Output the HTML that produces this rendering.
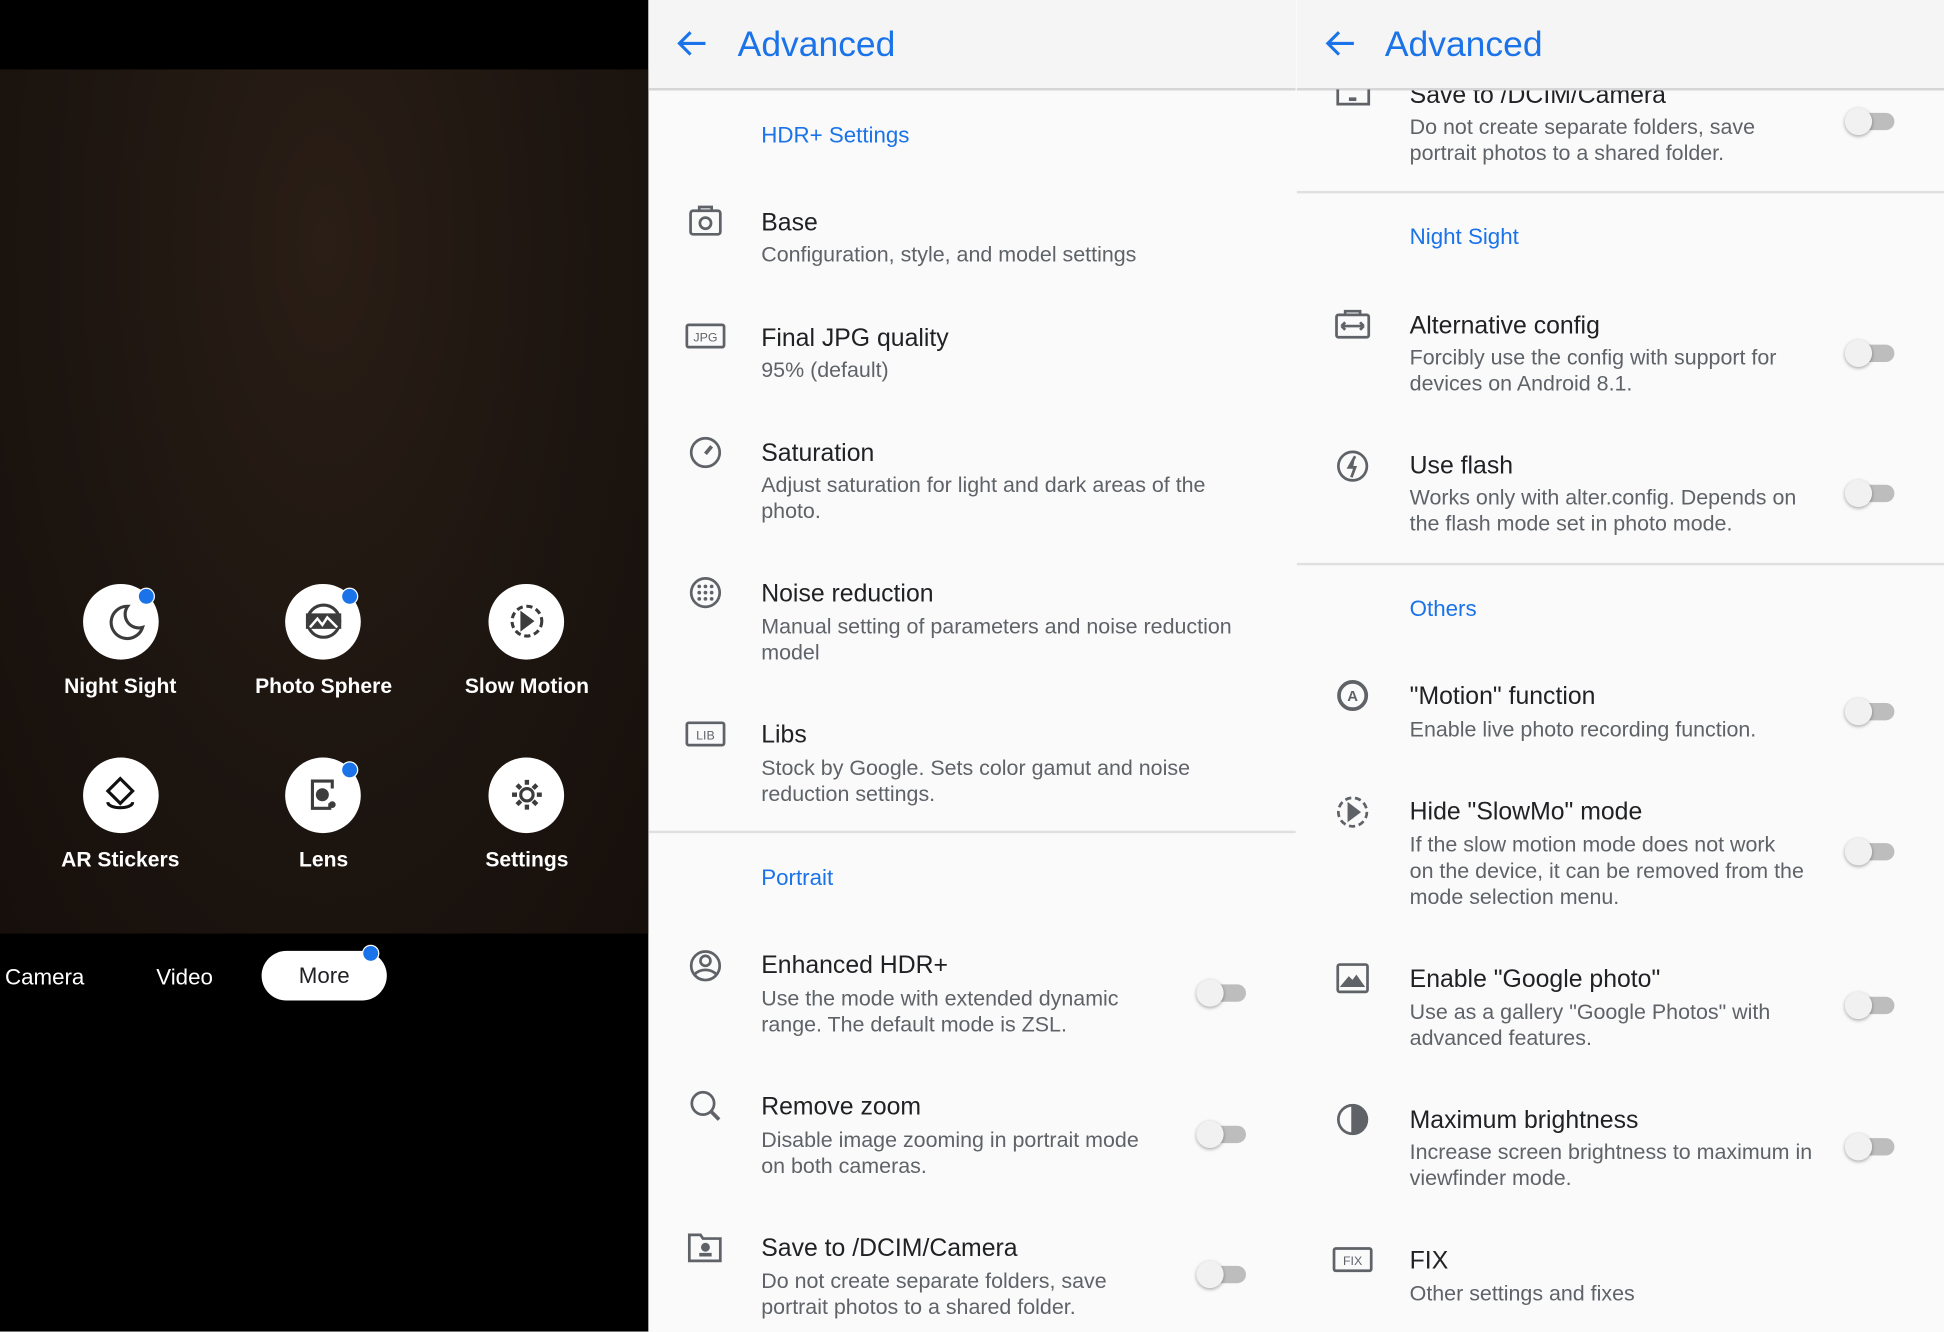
<!DOCTYPE html>
<html><head><meta charset="utf-8"><style>
html,body{margin:0;padding:0;width:1944px;height:1332px;overflow:hidden;background:#fafafa}
#w{position:absolute;left:0;top:0;width:1568px;height:1074px;transform:scale(1.23980);transform-origin:0 0;font-family:"Liberation Sans",sans-serif}
.a{position:absolute;white-space:nowrap}
.t{font-size:20px;color:#202124;line-height:24px;margin-top:1px}
.s{font-size:17.3px;color:#5f6368;line-height:21px;margin-top:1px}
.h{font-size:18px;color:#1a73e8;line-height:22px;margin-top:1px}
.lab{font-size:17px;color:#fff;line-height:20px;text-align:center;width:160px;font-weight:bold;margin-top:1px}
.c{position:absolute;width:61px;height:61px;border-radius:50%;background:#fff}
.dot{position:absolute;width:12px;height:12px;border-radius:50%;background:#1a73e8;border:1.5px solid #fff}
.tg{position:absolute;width:40px;height:24px}
.tg:before{content:"";position:absolute;left:6px;top:5px;width:34px;height:14px;border-radius:7px;background:#bdbdbd}
.tg:after{content:"";position:absolute;left:0;top:1px;width:22px;height:22px;border-radius:50%;background:#f1f1f1;box-shadow:0 1px 3px rgba(0,0,0,.35)}
.hdr{position:absolute;top:0;height:71px;background:#f5f5f5;border-bottom:2px solid #d6d6d6}
.ttl{font-size:28.6px;color:#1a73e8;line-height:34px;margin-top:1px}
.dv{position:absolute;height:2px;background:#e0e0e0}
</style></head><body><div id="w">
<!-- LEFT -->
<div class="a" style="left:0;top:0;width:523px;height:1074px;background:#000"></div>
<div class="a" style="left:0;top:56px;width:523px;height:697px;background:radial-gradient(ellipse at 50% 20%,#2a1e16 0%,#1d1510 55%,#160f0b 100%)"></div>
<div class="c" style="left:67px;top:471px"></div><div class="c" style="left:230px;top:471px"></div><div class="c" style="left:394px;top:471px"></div>
<div class="c" style="left:67px;top:611px"></div><div class="c" style="left:230px;top:611px"></div><div class="c" style="left:394px;top:611px"></div>
<div class="dot" style="left:111px;top:474px"></div><div class="dot" style="left:275px;top:474px"></div><div class="dot" style="left:275px;top:614px"></div>
<svg class="a" style="left:0;top:0" width="523" height="760" fill="none" stroke="#3c3c3c" stroke-width="2.5">
<path d="M103 489a13 13 0 1 0 12 17a11 11 0 0 1 -12 -17z"/>
<circle cx="261" cy="501" r="13"/><path d="M248 496h26v10h-26z" fill="#3c3c3c"/><path d="M250 506l6-7l4 5l4-6l8 8" stroke="#fff" stroke-width="2"/>
<circle cx="425" cy="501" r="12" stroke-dasharray="5 3"/><path d="M421 495l8 6l-8 6z" fill="#3c3c3c"/>
<path d="M97 628l10 10l-10 10l-10 -10z" stroke="#111"/><path d="M87 647c0 6 20 6 20 0" stroke="#111"/>
<path d="M258 630h-6v22h14v-4M258 630h10v6" /><circle cx="260" cy="641" r="4" fill="#3c3c3c"/><circle cx="268" cy="649" r="1.5" fill="#3c3c3c"/>
<circle cx="425" cy="641" r="5"/><path d="M425 629v4M425 649v4M413 641h4M433 641h4M417 633l3 3M430 646l3 3M417 649l3-3M430 636l3-3" stroke-width="3.5"/>
</svg>
<div class="a lab" style="left:17px;top:543px">Night Sight</div>
<div class="a lab" style="left:181px;top:543px">Photo Sphere</div>
<div class="a lab" style="left:345px;top:543px">Slow Motion</div>
<div class="a lab" style="left:17px;top:683px">AR Stickers</div>
<div class="a lab" style="left:181px;top:683px">Lens</div>
<div class="a lab" style="left:345px;top:683px">Settings</div>
<div class="a" style="left:4px;top:777px;font-size:18px;color:#fff;line-height:22px">Camera</div>
<div class="a" style="left:126px;top:777px;font-size:18px;color:#fff;line-height:22px">Video</div>
<div class="a" style="left:211px;top:767px;width:101px;height:40px;border-radius:20px;background:#fff;font-size:18px;color:#202124;line-height:41px;text-align:center">More</div>
<div class="dot" style="left:292px;top:762px"></div>

<!-- MIDDLE -->
<div class="a" style="left:523px;top:0;width:522px;height:1074px;background:#fafafa"></div>
<div class="hdr" style="left:523px;width:522px"></div>
<svg class="a" style="left:545px;top:22px" width="26" height="26" fill="none" stroke="#1a73e8" stroke-width="2.5"><path d="M24 13H3M12 4L3 13l9 9"/></svg>
<div class="a ttl" style="left:595px;top:18px">Advanced</div>
<div class="a h" style="left:614px;top:97px">HDR+ Settings</div>
<div class="a t" style="left:614px;top:167px">Base</div><div class="a s" style="left:614px;top:194px">Configuration, style, and model settings</div>
<div class="a t" style="left:614px;top:260px">Final JPG quality</div><div class="a s" style="left:614px;top:287px">95% (default)</div>
<div class="a t" style="left:614px;top:353px">Saturation</div><div class="a s" style="left:614px;top:380px">Adjust saturation for light and dark areas of the<br>photo.</div>
<div class="a t" style="left:614px;top:466px">Noise reduction</div><div class="a s" style="left:614px;top:494px">Manual setting of parameters and noise reduction<br>model</div>
<div class="a t" style="left:614px;top:580px">Libs</div><div class="a s" style="left:614px;top:608px">Stock by Google. Sets color gamut and noise<br>reduction settings.</div>
<div class="dv" style="left:523px;top:670px;width:522px"></div>
<div class="a h" style="left:614px;top:696px">Portrait</div>
<div class="a t" style="left:614px;top:766px">Enhanced HDR+</div><div class="a s" style="left:614px;top:794px">Use the mode with extended dynamic<br>range. The default mode is ZSL.</div>
<div class="a t" style="left:614px;top:880px">Remove zoom</div><div class="a s" style="left:614px;top:908px">Disable image zooming in portrait mode<br>on both cameras.</div>
<div class="a t" style="left:614px;top:994px">Save to /DCIM/Camera</div><div class="a s" style="left:614px;top:1022px">Do not create separate folders, save<br>portrait photos to a shared folder.</div>
<div class="tg" style="left:965px;top:789px"></div><div class="tg" style="left:965px;top:903px"></div><div class="tg" style="left:965px;top:1016px"></div>
<svg class="a" style="left:540px;top:150px" width="60" height="920" fill="none" stroke="#5f6368" stroke-width="2.2">
<rect x="17" y="20" width="24" height="19" rx="2"/><path d="M24 20v-3h10v3"/><circle cx="29" cy="30" r="4.5"/>
<rect x="14" y="112" width="30" height="18" rx="1.5"/><text x="29" y="125.5" font-size="10" fill="#5f6368" stroke="none" text-anchor="middle" font-family="Liberation Sans">JPG</text>
<circle cx="29" cy="215" r="11.5"/><path d="M29 216l5-6" stroke-width="3"/>
<circle cx="29" cy="328" r="11.5"/><g fill="#5f6368" stroke="none"><circle cx="24" cy="323" r="1.5"/><circle cx="29" cy="323" r="1.5"/><circle cx="34" cy="323" r="1.5"/><circle cx="24" cy="328" r="1.5"/><circle cx="29" cy="328" r="1.5"/><circle cx="34" cy="328" r="1.5"/><circle cx="24" cy="333" r="1.5"/><circle cx="29" cy="333" r="1.5"/><circle cx="34" cy="333" r="1.5"/></g>
<rect x="14" y="433" width="30" height="18" rx="1.5"/><text x="29" y="446.5" font-size="10" fill="#5f6368" stroke="none" text-anchor="middle" font-family="Liberation Sans">LIB</text>
<circle cx="29" cy="629" r="11.5"/><circle cx="29" cy="625" r="4"/><path d="M20 636c5-5 13-5 18 0"/>
<circle cx="27" cy="740" r="9"/><path d="M34 747l6 6" stroke-width="3"/>
<path d="M16 846h9l2 3h14v18h-25z"/><circle cx="29" cy="856" r="2.5" fill="#5f6368"/><path d="M24 862h10" stroke-width="3"/>
</svg>

<!-- RIGHT -->
<div class="a" style="left:1046px;top:0;width:522px;height:1074px;background:#fafafa"></div>
<div class="a t" style="left:1137px;top:64px">Save to /DCIM/Camera</div><div class="a s" style="left:1137px;top:91px">Do not create separate folders, save<br>portrait photos to a shared folder.</div>
<div class="hdr" style="left:1046px;width:522px"></div>
<svg class="a" style="left:1068px;top:22px" width="26" height="26" fill="none" stroke="#1a73e8" stroke-width="2.5"><path d="M24 13H3M12 4L3 13l9 9"/></svg>
<div class="a ttl" style="left:1117px;top:18px">Advanced</div>
<div class="dv" style="left:1046px;top:154px;width:522px"></div>
<div class="a h" style="left:1137px;top:179px">Night Sight</div>
<div class="a t" style="left:1137px;top:250px">Alternative config</div><div class="a s" style="left:1137px;top:277px">Forcibly use the config with support for<br>devices on Android 8.1.</div>
<div class="a t" style="left:1137px;top:363px">Use flash</div><div class="a s" style="left:1137px;top:390px">Works only with alter.config. Depends on<br>the flash mode set in photo mode.</div>
<div class="dv" style="left:1046px;top:454px;width:522px"></div>
<div class="a h" style="left:1137px;top:479px">Others</div>
<div class="a t" style="left:1137px;top:549px">"Motion" function</div><div class="a s" style="left:1137px;top:577px">Enable live photo recording function.</div>
<div class="a t" style="left:1137px;top:642px">Hide "SlowMo" mode</div><div class="a s" style="left:1137px;top:670px">If the slow motion mode does not work<br>on the device, it can be removed from the<br>mode selection menu.</div>
<div class="a t" style="left:1137px;top:777px">Enable "Google photo"</div><div class="a s" style="left:1137px;top:805px">Use as a gallery "Google Photos" with<br>advanced features.</div>
<div class="a t" style="left:1137px;top:891px">Maximum brightness</div><div class="a s" style="left:1137px;top:918px">Increase screen brightness to maximum in<br>viewfinder mode.</div>
<div class="a t" style="left:1137px;top:1004px">FIX</div><div class="a s" style="left:1137px;top:1032px">Other settings and fixes</div>
<div class="tg" style="left:1488px;top:86px"></div><div class="tg" style="left:1488px;top:273px"></div><div class="tg" style="left:1488px;top:386px"></div>
<div class="tg" style="left:1488px;top:562px"></div><div class="tg" style="left:1488px;top:675px"></div><div class="tg" style="left:1488px;top:799px"></div><div class="tg" style="left:1488px;top:913px"></div>
<svg class="a" style="left:1062px;top:72px" width="60" height="1000" fill="none" stroke="#5f6368" stroke-width="2.2">
<path d="M17 0v12h25v-12"/><path d="M26 8h6" stroke-width="3"/>
<rect x="16" y="182" width="26" height="18" rx="1.5"/><path d="M23 182v-3h12v3M20 191h18M20 191l3-3M20 191l3 3M38 191l-3-3M38 191l-3 3"/>
<circle cx="29" cy="304" r="11.5"/><path d="M31 296l-5 9h5l-3 8" fill="#5f6368"/>
<circle cx="29" cy="489" r="11" stroke-width="3"/><text x="29" y="493.5" font-size="12" font-weight="bold" fill="#5f6368" stroke="none" text-anchor="middle" font-family="Liberation Sans">A</text>
<circle cx="29" cy="583" r="11.5" stroke-dasharray="5 3"/><path d="M26 577l8 6l-8 6z" fill="#5f6368"/>
<rect x="17" y="706" width="24" height="22" rx="1.5"/><path d="M21 723l5-6l3 3l3-4l5 7z" fill="#5f6368"/>
<circle cx="29" cy="831" r="11.5"/><path d="M29 820a11 11 0 0 1 0 22z" fill="#5f6368"/>
<rect x="14" y="935" width="30" height="18" rx="1.5"/><text x="29" y="948.5" font-size="10" fill="#5f6368" stroke="none" text-anchor="middle" font-family="Liberation Sans">FIX</text>
</svg>
</div></body></html>
